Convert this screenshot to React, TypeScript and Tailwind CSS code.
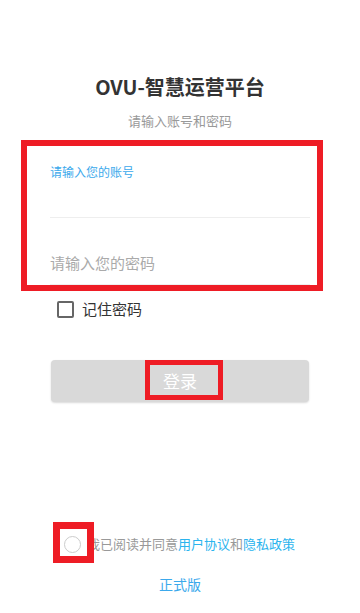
export default function App() {
  const font = { fontFamily: '"Noto Sans CJK SC", "Noto Sans", sans-serif' };
  return (
    <div className="relative h-[613px] w-[360px] overflow-hidden bg-white" style={font}>
      <div className="flex flex-col items-center pt-[72px]">
        <h1 className="text-[20px] font-bold leading-[30px] text-[#333]">OVU-智慧运营平台</h1>
        <p className="mt-[9px] text-[13px] leading-[20px] text-[#999]">请输入账号和密码</p>
      </div>

      <div className="relative mt-[11px] px-[50px]">
        <div className="pt-[22px]">
          <div className="text-[12px] leading-[16px] text-[#3ba9ec]">请输入您的账号</div>
          <div className="h-[37px]" />
          <div className="h-px bg-[#eeeeee]" />
        </div>
        <div className="flex h-[66px] items-end pb-[10px]">
          <span className="text-[15px] leading-[22px] text-[#aaa]">请输入您的密码</span>
        </div>
        <div className="h-px bg-[#eeeeee]" />
        <div className="pointer-events-none absolute left-[21px] top-[-2px] h-[151px] w-[302px] border-[6px] border-[#ee1c25]" />
      </div>

      <div className="mt-[14px] flex items-center gap-[8px] pl-[57px]">
        <div className="h-[17px] w-[17px] rounded-[2px] border-2 border-[#666]" />
        <span className="text-[15px] leading-[20px] text-[#333]">记住密码</span>
      </div>

      <div className="mt-[41px] px-[51px]">
        <div className="relative flex h-[42px] items-center justify-center rounded-[4px] bg-[#d9d9d9] shadow-[0_1px_2px_rgba(0,0,0,0.15)]">
          <span className="text-[17px] text-white">登录</span>
          <div className="pointer-events-none absolute left-[94px] top-0 h-[40px] w-[78px] border-[5px] border-[#ee1c25]" />
        </div>
      </div>

      <div className="relative mt-[132px] flex items-center pl-[64px]">
        <div className="h-[17px] w-[17px] rounded-full border border-[#ccc]" />
        <span className="ml-[6px] text-[13px] leading-[20px] text-[#999]">
          我已阅读并同意<span className="text-[#2bb4ee]">用户协议</span>和<span className="text-[#2bb4ee]">隐私政策</span>
        </span>
        <div className="pointer-events-none absolute left-[53px] top-[-12px] h-[41px] w-[41px] border-[7px] border-[#ee1c25]" />
      </div>

      <div className="mt-[20px] text-center text-[14px] leading-[20px] text-[#3ba9ec]">正式版</div>
    </div>
  );
}
